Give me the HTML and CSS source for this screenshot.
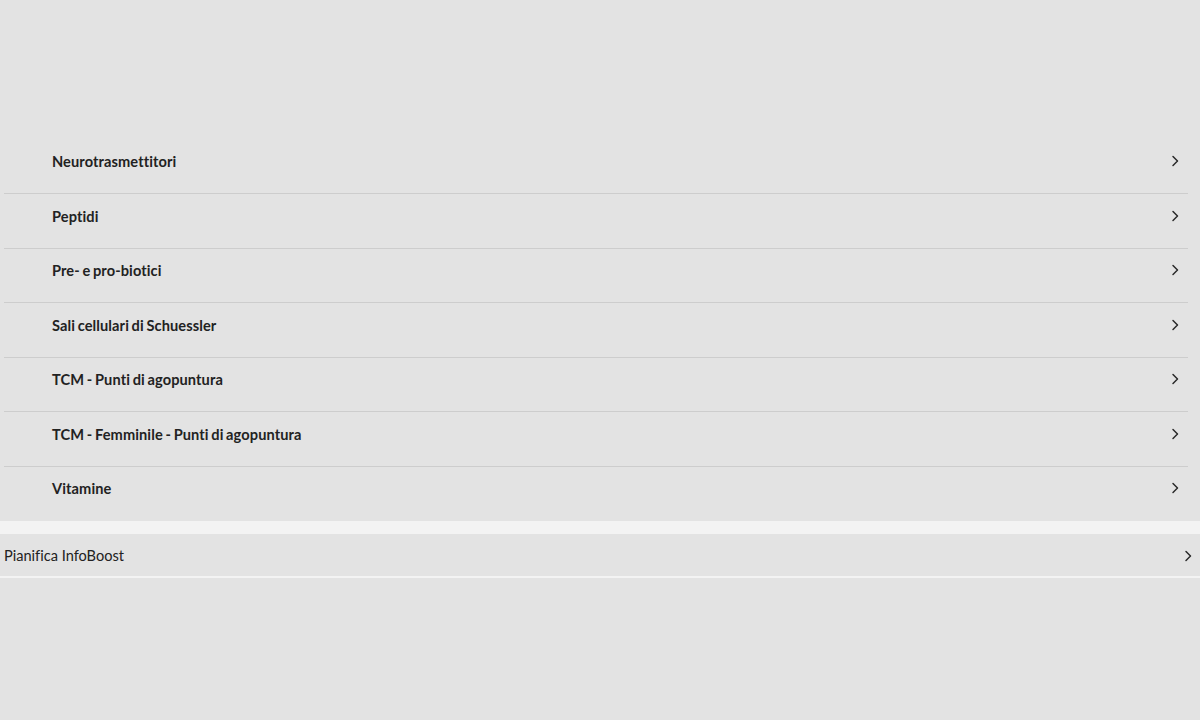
FILE: index.html
```html
<!DOCTYPE html>
<html lang="it">
<head>
<meta charset="utf-8">
<title>Categorie</title>
<link rel="stylesheet" href="styles.css">
</head>
<body>
<div class="page">
  <ul class="menu">
    <li class="menu-item"><span class="label">Neurotrasmettitori</span><svg class="chev" viewBox="0 0 8 12"><path d="M2 1.5 L6.5 6 L2 10.5"/></svg></li>
    <li class="menu-item"><span class="label">Peptidi</span><svg class="chev" viewBox="0 0 8 12"><path d="M2 1.5 L6.5 6 L2 10.5"/></svg></li>
    <li class="menu-item"><span class="label">Pre- e pro-biotici</span><svg class="chev" viewBox="0 0 8 12"><path d="M2 1.5 L6.5 6 L2 10.5"/></svg></li>
    <li class="menu-item"><span class="label">Sali cellulari di Schuessler</span><svg class="chev" viewBox="0 0 8 12"><path d="M2 1.5 L6.5 6 L2 10.5"/></svg></li>
    <li class="menu-item"><span class="label">TCM - Punti di agopuntura</span><svg class="chev" viewBox="0 0 8 12"><path d="M2 1.5 L6.5 6 L2 10.5"/></svg></li>
    <li class="menu-item"><span class="label">TCM - Femminile - Punti di agopuntura</span><svg class="chev" viewBox="0 0 8 12"><path d="M2 1.5 L6.5 6 L2 10.5"/></svg></li>
    <li class="menu-item"><span class="label">Vitamine</span><svg class="chev" viewBox="0 0 8 12"><path d="M2 1.5 L6.5 6 L2 10.5"/></svg></li>
  </ul>
  <div class="divider"></div>
  <div class="plan-row"><span class="plan-label">Pianifica InfoBoost</span><svg class="chev" viewBox="0 0 8 12"><path d="M2 1.5 L6.5 6 L2 10.5"/></svg></div>
  <div class="plan-line"></div>
</div>
</body>
</html>
```
FILE: styles.css
```css
html, body {
  margin: 0;
  padding: 0;
  background: #e3e3e3;
  font-family: Lato, "Liberation Sans", sans-serif;
  color: #222;
}
.page {
  padding-top: 139.5px;
}
.menu {
  list-style: none;
  margin: 0 12px 0 4px;
  padding: 0;
}
.menu-item {
  display: flex;
  align-items: flex-start;
  justify-content: space-between;
  box-sizing: border-box;
  height: 54.5px;
  padding: 12.5px 9px 0 48px;
  border-bottom: 1px solid #cdcdcd;
}
.menu-item:last-child {
  border-bottom: none;
}
.label {
  font-size: 14.6px;
  font-weight: 700;
  line-height: 20px;
  letter-spacing: 0.1px;
  word-spacing: -1px;
  font-variant-ligatures: none;
}
.chev {
  width: 8px;
  height: 12px;
  margin-top: 3px;
  fill: none;
  stroke: #2a2a2a;
  stroke-width: 1.5;
  stroke-linecap: round;
  stroke-linejoin: round;
}
.divider {
  height: 13px;
  background: #f3f3f3;
}
.plan-row {
  display: flex;
  align-items: center;
  justify-content: space-between;
  box-sizing: border-box;
  height: 42px;
  padding: 1px 8px 0 4px;
}
.plan-label {
  font-size: 14.6px;
  line-height: 20px;
  font-variant-ligatures: none;
}
.plan-row .chev {
  margin-top: 0;
}
.plan-line {
  height: 2px;
  background: #f3f3f3;
}
```
